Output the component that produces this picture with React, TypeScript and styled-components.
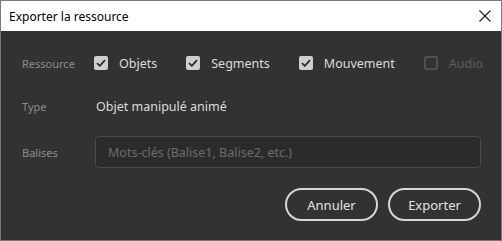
import styled, { createGlobalStyle } from 'styled-components';

const GlobalStyle = createGlobalStyle`
  html, body {
    margin: 0;
    padding: 0;
    background: #ffffff;
  }
  * {
    box-sizing: border-box;
  }
`;

interface ResourceOption {
  label: string;
  checked: boolean;
  disabled?: boolean;
}

const resourceOptions: ResourceOption[] = [
  { label: 'Objets', checked: true },
  { label: 'Segments', checked: true },
  { label: 'Mouvement', checked: true },
  { label: 'Audio', checked: false, disabled: true },
];

// fenêtre d'export d'une ressource
function App() {
  return (
    <>
      <GlobalStyle />
      <Window>
        <TitleBar>
          <h1 className="title">Exporter la ressource</h1>
          <CloseButton aria-label="Fermer">
            <svg width="12" height="12" viewBox="0 0 12 12">
              <path d="M0.5 0.5 L11.5 11.5 M11.5 0.5 L0.5 11.5" stroke="#1a1a1a" strokeWidth="1.1" />
            </svg>
          </CloseButton>
        </TitleBar>
        <Body>
          <Row $gap={19}>
            <Label>Ressource</Label>
            <Options>
              {resourceOptions.map((option) => (
                <Option key={option.label} $disabled={option.disabled}>
                  <CheckBox $checked={option.checked} $disabled={option.disabled}>
                    {option.checked && (
                      <svg width="10" height="8" viewBox="0 0 10 8">
                        <path d="M1 4.2 L3.8 6.8 L9 1.2" fill="none" stroke="#2b2b2b" strokeWidth="1.8" />
                      </svg>
                    )}
                  </CheckBox>
                  {option.label}
                </Option>
              ))}
            </Options>
          </Row>
          <Row $gap={18}>
            <Label>Type</Label>
            <Value>Objet manipulé animé</Value>
          </Row>
          <Row $gap={20}>
            <Label>Balises</Label>
            <TagInput placeholder="Mots-clés (Balise1, Balise2, etc.)" />
          </Row>
          <Footer>
            <PillButton>Annuler</PillButton>
            <PillButton>Exporter</PillButton>
          </Footer>
        </Body>
      </Window>
    </>
  );
}

export default App;

const Window = styled.div`
  width: 502px;
  height: 241px;
  display: flex;
  flex-direction: column;
  border: 1px solid #7a7a7a;
  font-family: 'Noto Sans', 'Open Sans', sans-serif;
`;

const TitleBar = styled.div`
  height: 30px;
  flex-shrink: 0;
  display: flex;
  align-items: center;
  justify-content: space-between;
  background: #ffffff;
  padding: 0 10px 0 8px;

  .title {
    margin: 0;
    font-size: 12px;
    font-weight: 400;
    color: #000000;
  }
`;

const CloseButton = styled.button`
  border: none;
  background: transparent;
  padding: 0;
  display: flex;
  width: 12px;
  height: 12px;
`;

const Body = styled.div`
  flex: 1;
  background: #323232;
  display: flex;
  flex-direction: column;
  padding: 20px 20px 0 21px;
`;

const Row = styled.div<{ $gap: number }>`
  display: flex;
  align-items: center;
  min-height: 24px;
  margin-bottom: ${({ $gap }) => $gap}px;
`;

const Label = styled.span`
  width: 72px;
  flex-shrink: 0;
  font-size: 11px;
  color: #8c8c8c;
`;

const Options = styled.div`
  display: flex;
  align-items: center;
`;

const Option = styled.label<{ $disabled?: boolean }>`
  display: flex;
  align-items: center;
  gap: 11px;
  font-size: 12.5px;
  margin-right: 29px;
  color: ${({ $disabled }) => ($disabled ? '#5c5c5c' : '#dcdcdc')};
`;

const CheckBox = styled.span<{ $checked: boolean; $disabled?: boolean }>`
  width: 14px;
  height: 14px;
  border-radius: 2px;
  display: flex;
  align-items: center;
  justify-content: center;
  background: ${({ $checked }) => ($checked ? '#cfcfcf' : 'transparent')};
  border: ${({ $checked, $disabled }) =>
    $checked ? 'none' : `2px solid ${$disabled ? '#505050' : '#cfcfcf'}`};
`;

const Value = styled.span`
  padding-left: 2px;
  font-size: 12.5px;
  color: #dcdcdc;
`;

const TagInput = styled.input`
  flex: 1;
  height: 32px;
  margin-left: 1px;
  background: #2b2b2b;
  border: 1px solid #4a4a4a;
  border-radius: 4px;
  padding: 0 12px;
  font-family: inherit;
  font-size: 12.5px;
  color: #dcdcdc;
  outline: none;

  &::placeholder {
    color: #6c6c6c;
  }
`;

const Footer = styled.div`
  display: flex;
  justify-content: flex-end;
  gap: 10px;
`;

const PillButton = styled.button`
  width: 93px;
  height: 33px;
  border-radius: 17px;
  border: 2px solid #d6d6d6;
  background: transparent;
  color: #e2e2e2;
  font-family: inherit;
  font-size: 13px;
  padding: 0;
`;
